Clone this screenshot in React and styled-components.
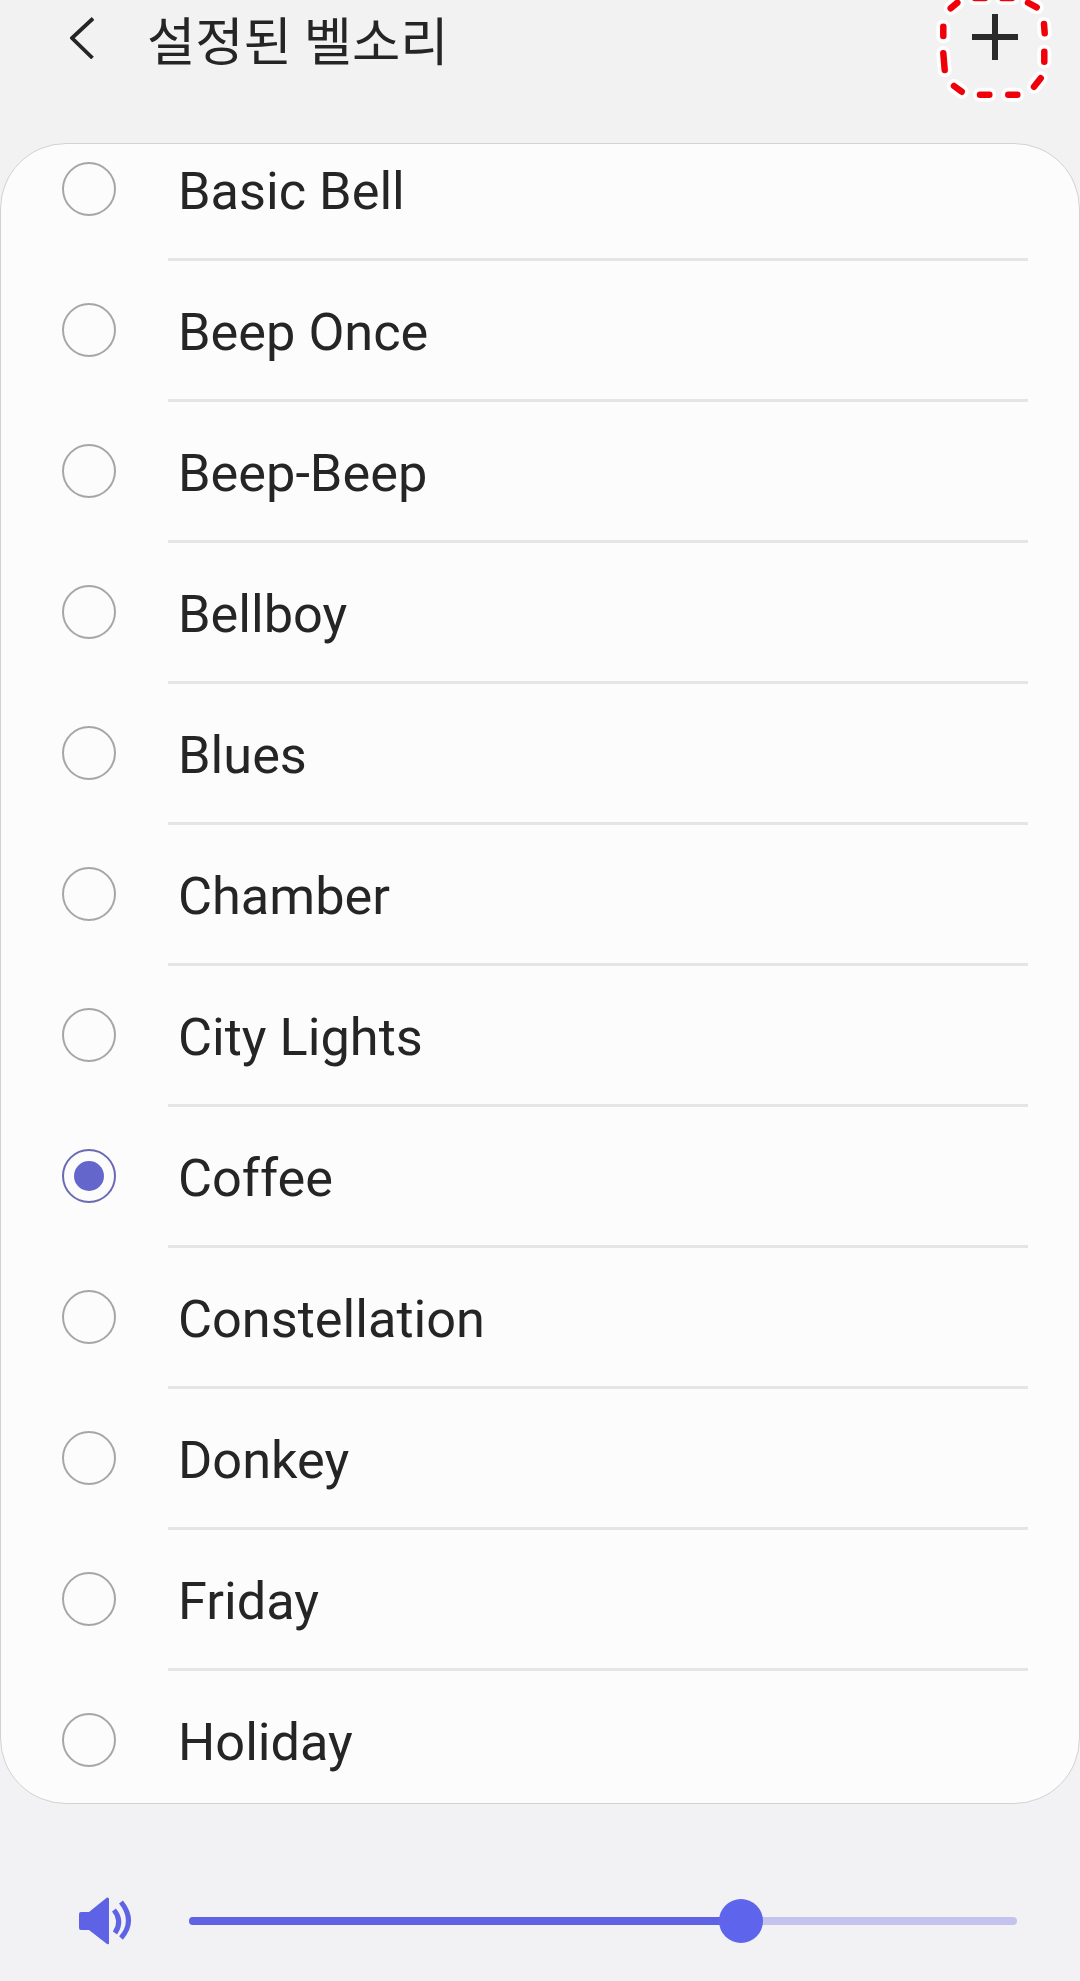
import React from "react";
import styled, { createGlobalStyle } from "styled-components";

const Global = createGlobalStyle`
  html, body { margin: 0; padding: 0; background: #f2f2f3; }
  #root { width: 1080px; height: 1981px; overflow: hidden; }
`;

const Page = styled.div`
  position: relative;
  width: 1080px;
  height: 1981px;
  overflow: hidden;
  display: flex;
  flex-direction: column;
  background: linear-gradient(#f2f2f2, #f2f2f4);
  font-family: Roboto, "Noto Sans CJK KR", sans-serif;
  color: #252525;
`;

const Header = styled.header`
  height: 143px;
  flex: none;
  box-sizing: border-box;
  padding: 0 0 67px 70px;
  display: flex;
  align-items: center;
`;

const BackIcon = styled.svg`
  width: 24px;
  height: 42px;
  flex: none;
  margin-right: 53px;
`;

const Title = styled.h1`
  margin: 0;
  font-family: "Noto Sans CJK KR", sans-serif;
  font-size: 52.5px;
  font-weight: 400;
  line-height: 76px;
  letter-spacing: 0;
  white-space: nowrap;
`;

const AddIcon = styled.svg`
  position: absolute;
  left: 970px;
  top: 12px;
  width: 50px;
  height: 50px;
`;

const Annotation = styled.svg`
  position: absolute;
  left: 0;
  top: 0;
  width: 1080px;
  height: 120px;
`;

const Card = styled.section`
  height: 1661px;
  flex: none;
  box-sizing: border-box;
  border: 1px solid #d2d2d2;
  border-radius: 66px;
  background: #fcfcfc;
  overflow: hidden;
`;

const List = styled.ul`
  list-style: none;
  margin: -24px 0 0;
  padding: 0;
`;

const Row = styled.li`
  height: 141px;
  display: flex;
  align-items: stretch;
  padding: 0 51px 0 61px;
  box-sizing: border-box;
`;

const Radio = styled.span`
  flex: none;
  align-self: center;
  width: 54px;
  height: 54px;
  margin: -3px 52px 0 0;
  box-sizing: border-box;
  border-radius: 50%;
  border: 2.5px solid ${(p) => (p.$checked ? "#6a69b4" : "#a6a6a6")};
  display: flex;
  align-items: center;
  justify-content: center;
  &::after {
    content: "";
    display: ${(p) => (p.$checked ? "block" : "none")};
    width: 30px;
    height: 30px;
    border-radius: 50%;
    background: #6566cc;
  }
`;

const Label = styled.div`
  flex: 1;
  display: flex;
  align-items: center;
  box-sizing: border-box;
  padding: 3px 0 0 10px;
  font-size: 52.3px;
  letter-spacing: 0;
  border-bottom: ${(p) => (p.$last ? "3px solid transparent" : "3px solid #e5e5e5")};
`;

const Footer = styled.footer`
  flex: 1;
  display: flex;
  align-items: center;
  box-sizing: border-box;
  padding: 56px 63px 0 79px;
  gap: 57px;
`;

const SpeakerIcon = styled.svg`
  width: 53px;
  height: 48px;
  flex: none;
`;

const Track = styled.div`
  position: relative;
  flex: 1;
  height: 8px;
  border-radius: 4px;
  background: #c3c3ee;
`;

const Fill = styled.div`
  height: 100%;
  border-radius: 4px;
  background: #5e62e4;
`;

const Thumb = styled.div`
  position: absolute;
  top: 50%;
  width: 44px;
  height: 44px;
  border-radius: 50%;
  background: #5e64ec;
  transform: translate(-50%, -50%);
`;

const tones = [
  "Basic Bell", "Beep Once", "Beep-Beep", "Bellboy", "Blues", "Chamber",
  "City Lights", "Coffee", "Constellation", "Donkey", "Friday", "Holiday",
];

const dashes = [
  [950.7, 8.3, 957.3, 2.7],
  [975, -2, 985, -2],
  [1002, -2, 1012, -2],
  [1028, 2.7, 1036.7, 7.3],
  [1044, 24, 1044.7, 33.3],
  [1044.3, 51.7, 1044.3, 61.7],
  [1040.7, 78.3, 1034, 86.7],
  [1017.3, 94.7, 1008.3, 94.7],
  [989.3, 94.7, 980, 94.7],
  [961.7, 91.7, 954, 86],
  [944.7, 70, 943.3, 53.3],
  [943.3, 36, 943.3, 26.7],
];

const level = 0.6667;

export default function App() {
  return (
    <Page>
      <Global />
      <Header>
        <BackIcon viewBox="0 0 24 42" aria-label="back">
          <path d="M23 1.5 L2 21 L22.5 41" fill="none" stroke="#252525" strokeWidth="3.8" />
        </BackIcon>
        <Title>설정된 벨소리</Title>
      </Header>
      <AddIcon viewBox="0 0 50 50" aria-label="add">
        <path d="M25 2 V48 M2 25 H48" fill="none" stroke="#2a2a2a" strokeWidth="6" />
      </AddIcon>
      <Annotation viewBox="0 0 1080 120">
        {dashes.map(([a, b, c, d]) => (
          <line key={`w${a}${b}`} x1={a} y1={b} x2={c} y2={d} stroke="#fff" strokeWidth="14" strokeLinecap="round" />
        ))}
        {dashes.map(([a, b, c, d]) => (
          <line key={`r${a}${b}`} x1={a} y1={b} x2={c} y2={d} stroke="#f00008" strokeWidth="6.5" strokeLinecap="round" />
        ))}
      </Annotation>
      <Card>
        <List>
          {tones.map((name, i) => (
            <Row key={name}>
              <Radio $checked={name === "Coffee"} />
              <Label $last={i === tones.length - 1}>{name}</Label>
            </Row>
          ))}
        </List>
      </Card>
      <Footer>
        <SpeakerIcon viewBox="0 0 53 48" aria-label="volume">
          <path
            d="M2 15 H10 L28 0.5 Q30 0 30 2 V46 Q30 48 28 47 L10 33 H2 Q0 33 0 31 V17 Q0 15 2 15 Z"
            fill="#5e62e4"
          />
          <path d="M35 13 Q44 24 36 36" fill="none" stroke="#5e62e4" strokeWidth="5" />
          <path d="M42 5 Q57 24 42 41" fill="none" stroke="#5e62e4" strokeWidth="5" />
        </SpeakerIcon>
        <Track>
          <Fill style={{ width: `${level * 100}%` }} />
          <Thumb style={{ left: `${level * 100}%` }} />
        </Track>
      </Footer>
    </Page>
  );
}
